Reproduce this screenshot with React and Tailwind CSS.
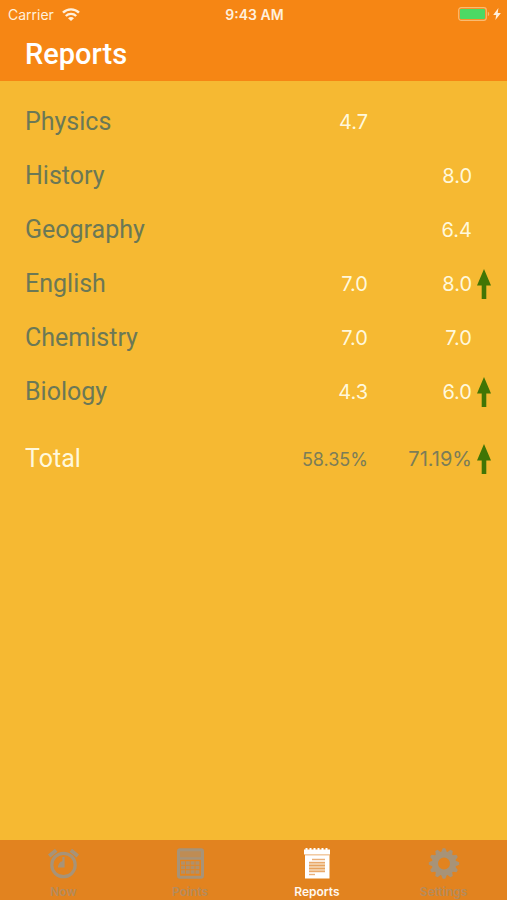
import React, { useState } from 'react';

const subjects = [
  { name: 'Physics', first: '4.7', second: '' },
  { name: 'History', first: '', second: '8.0' },
  { name: 'Geography', first: '', second: '6.4' },
  { name: 'English', first: '7.0', second: '8.0', up: true },
  { name: 'Chemistry', first: '7.0', second: '7.0' },
  { name: 'Biology', first: '4.3', second: '6.0', up: true },
];

const total = { first: '58.35%', second: '71.19%', up: true };

function WifiIcon() {
  return (
    <svg width="18" height="13" viewBox="0 0 18 13" fill="none" stroke="currentColor" strokeWidth="2.4" aria-hidden="true">
      <path d="M1 4.7C5.4 0.3 12.6 0.3 17 4.7" />
      <path d="M3.8 8c2.9-2.8 7.5-2.8 10.4 0" />
      <path d="M9 13L6 10.2c1.7-1.6 4.3-1.6 6 0z" fill="currentColor" stroke="none" />
    </svg>
  );
}

function BatteryIcon() {
  return (
    <svg width="32" height="14" viewBox="0 0 32 14" aria-hidden="true">
      <rect x="0.7" y="0.7" width="27.6" height="12.6" rx="2.5" fill="none" stroke="#fabb72" strokeWidth="1.2" />
      <rect x="2" y="2" width="25" height="10" rx="1" fill="#4cd964" />
      <path d="M29.8 4.8c1.9.7 1.9 3.7 0 4.4z" fill="#fabb72" />
    </svg>
  );
}

function BoltIcon() {
  return (
    <svg width="8" height="12" viewBox="0 0 8 12" fill="currentColor" aria-hidden="true">
      <path d="M5.4 0L0.2 6.9h3L2.4 12 7.9 4.9H4.7z" />
    </svg>
  );
}

function UpArrow() {
  return (
    <svg className="block" width="14" height="30" viewBox="0 0 14 30" fill="#417505" role="img" aria-label="Up">
      <path d="M7 0L14 16.5H9.3V30H4.7V16.5H0z" />
    </svg>
  );
}

function ClockIcon() {
  return (
    <svg width="32" height="32" viewBox="0 0 32 32" fill="none" stroke="currentColor" aria-hidden="true">
      <circle cx="16.5" cy="17" r="11.7" strokeWidth="3.2" />
      <path d="M2.2 8L9.2 2.2M23.8 2.2L30.800 8" strokeWidth="3.8" />
      <path d="M16.500 9v9.500H11" strokeWidth="2.200" />
      <path d="M16.500 13v5h-5c0-2.800 2.200-5 5-5z" fill="currentColor" stroke="none" />
    </svg>
  );
}

function CalculatorIcon() {
  return (
    <svg width="32" height="32" viewBox="0 0 32 32" fill="none" stroke="currentColor" aria-hidden="true">
      <rect x="4.500" y="1.800" width="24" height="27.500" rx="1.500" strokeWidth="3" />
      <path d="M5 10.500h23" strokeWidth="2.500" />
      <path d="M6 3h21v7H6z" fill="currentColor" fillOpacity="0.6" stroke="none" />
      <path d="M7 15h18.500M7 19.500h18.500M7 24h18.500" strokeWidth="3.600" strokeDasharray="4 0.800" strokeOpacity="0.850" />
    </svg>
  );
}

function NotepadIcon() {
  return (
    <svg width="32" height="32" viewBox="0 0 32 32" aria-hidden="true">
      <path
        d="M3 1.5h1.5V0h2v1.5h2V0h2v1.5h2V0h2v1.5h2V0h2v1.5h2V0h2v1.5h2V0h2v1.5H29v5H3z"
        fill="currentColor"
      />
      <path d="M4 6.5h24.500v24H4z" fill="currentColor" />
      <path d="M4 7h24.500" stroke="#e69a52" strokeWidth="0.600" />
      <path d="M11 11.500h13M8 14.500h16M8 17.500h16M8 20.500h16M8 23.500h16" stroke="#eab07a" strokeWidth="1.500" />
      <path d="M8 14.500h16v9H8z" fill="#e2831f" fillOpacity="0.3" />
      <path d="M8 26.500h6" stroke="#eab07a" strokeWidth="1.400" />
    </svg>
  );
}

function GearIcon() {
  const teeth = [0, 30, 60, 90, 120, 150, 180, 210, 240, 270, 300, 330];
  return (
    <svg width="32" height="32" viewBox="0 0 32 32" fill="currentColor" aria-hidden="true">
      {teeth.map(a => (
        <path key={a} d="M12.8 5L14.7 0.3h2.6L19.2 5z" transform={`rotate(${a} 16 15.5)`} />
      ))}
      <circle cx="16" cy="15.5" r="9" fill="none" stroke="currentColor" strokeWidth="6" />
    </svg>
  );
}

const tabs = [
  { name: 'Now', Icon: ClockIcon },
  { name: 'Points', Icon: CalculatorIcon },
  { name: 'Reports', Icon: NotepadIcon },
  { name: 'Settings', Icon: GearIcon },
];

export default function App() {
  const [active, setActive] = useState('Reports');

  return (
    <div className="min-h-screen flex flex-col bg-[#f6b932] font-['Roboto',sans-serif]">
      <header className="bg-[#f68614] text-white">
        <div className="grid grid-cols-3 items-center h-7 pl-2 pr-[6px] text-[14px] text-[#fff0dc] font-['Inter',sans-serif]">
          <div className="flex items-center gap-2">
            <span>Carrier</span>
            <WifiIcon />
          </div>
          <div className="text-center font-semibold">9:43 AM</div>
          <div className="flex items-center justify-end gap-[3px]">
            <BatteryIcon />
            <BoltIcon />
          </div>
        </div>
        <h1 className="px-[25px] pt-2 pb-[9px] text-[29px] leading-9 font-medium">Reports</h1>
      </header>

      <main className="flex-1 pt-[14px]">
        <table className="w-full">
          <tbody>
            {subjects.map(s => (
              <tr key={s.name} className="h-[54px]">
                <th scope="row" className="pl-[25px] text-left text-[25px] font-normal text-[#6b7856]">{s.name}</th>
                <td className="w-[104px] text-right text-[20px] text-[#fff8dc] font-['Inter',sans-serif]">{s.first}</td>
                <td className="w-[104px] text-right text-[20px] text-[#fff8dc] font-['Inter',sans-serif]">{s.second}</td>
                <td className="w-[35px] pl-[5px]">{s.up && <UpArrow />}</td>
              </tr>
            ))}
          </tbody>
          <tfoot>
            <tr className="h-20">
              <th scope="row" className="pl-[25px] text-left text-[25px] font-normal text-[#fff8dc]">Total</th>
              <td className="text-right text-[18px] text-[#7b7d58] font-['Inter',sans-serif]">{total.first}</td>
              <td className="text-right text-[20px] text-[#7b7d58] font-['Inter',sans-serif]">{total.second}</td>
              <td className="pl-[5px]">{total.up && <UpArrow />}</td>
            </tr>
          </tfoot>
        </table>
      </main>

      <nav className="grid grid-cols-4 h-[60px] bg-[#e2831f]">
        {tabs.map(({ name, Icon }) => (
          <button
            key={name}
            type="button"
            onClick={() => setActive(name)}
            className={`flex flex-col items-center pt-2 gap-1 text-[12px] leading-4 font-semibold font-['Inter',sans-serif] ${active === name ? 'text-[#fff8ee]' : 'text-[#b58b5c]'}`}
          >
            <span className={active === name ? 'text-white' : 'text-[#a79378]'}>
              <Icon />
            </span>
            <span>{name}</span>
          </button>
        ))}
      </nav>
    </div>
  );
}
